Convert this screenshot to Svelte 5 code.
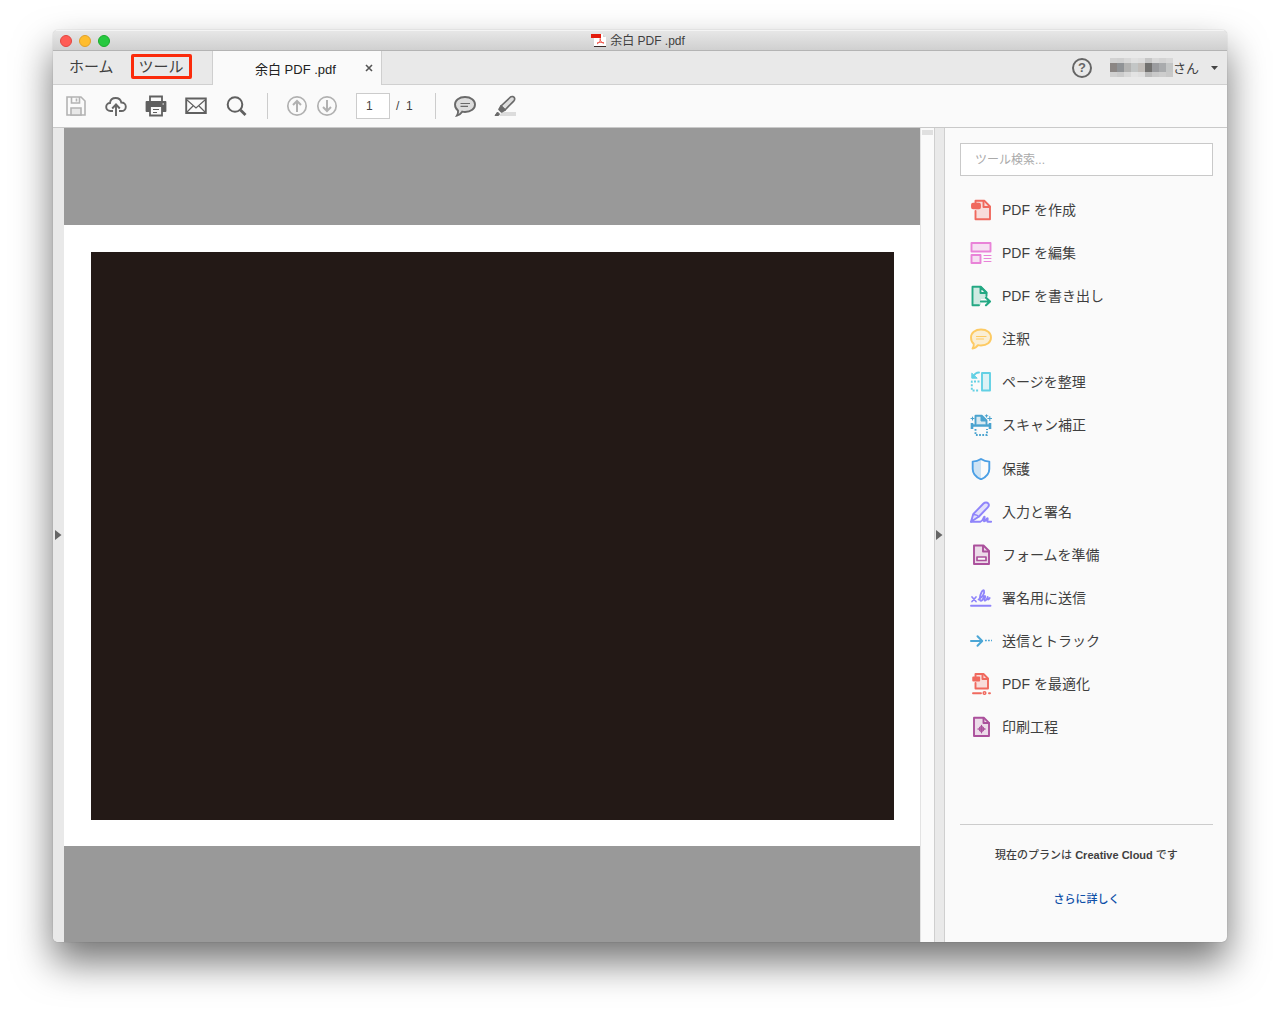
<script>
  const tools = [
    { icon: 'create', label: 'PDF を作成', color: '#f0695e' },
    { icon: 'edit', label: 'PDF を編集', color: '#e983d8' },
    { icon: 'export', label: 'PDF を書き出し', color: '#23a883' },
    { icon: 'comment', label: '注釈', color: '#fdca62' },
    { icon: 'organize', label: 'ページを整理', color: '#62d0e4' },
    { icon: 'scan', label: 'スキャン補正', color: '#4aa3cf' },
    { icon: 'protect', label: '保護', color: '#4b9fe5' },
    { icon: 'sign', label: '入力と署名', color: '#8f84fa' },
    { icon: 'form', label: 'フォームを準備', color: '#ab509c' },
    { icon: 'send-sign', label: '署名用に送信', color: '#8f84fa' },
    { icon: 'track', label: '送信とトラック', color: '#4ba6d6' },
    { icon: 'optimize', label: 'PDF を最適化', color: '#f0695e' },
    { icon: 'print', label: '印刷工程', color: '#ab509c' }
  ];

  const mosaic = [
    ['#d2d2d2', '#d0d0d0', '#d8d8d8', '#e0e0e0', '#dddddd', '#c6c6c6', '#d8d8d8', '#d3d3d3', '#d8d8d8'],
    ['#8b8684', '#909396', '#b3b3b2', '#c3c6c6', '#c1bdb9', '#72716f', '#9b9c9f', '#a9abad', '#c4c6c6'],
    ['#d0d0d0', '#cbcbcb', '#d8d8d8', '#e3e3e3', '#dfdfdf', '#bcbcbc', '#c9c9c9', '#cdcdcd', '#c8c8c8']
  ];
  const rowTop = [0, 5, 14];
  const rowHeight = [5, 9, 5];

  let page = $state('1');
  let query = $state('');
</script>

{#snippet toolIcon(name, color)}
  <svg class="tool-icon" viewBox="0 0 22 22" fill="none" stroke={color} stroke-width="1.9" stroke-linejoin="round" stroke-linecap="round" aria-hidden="true">
    {#if name === 'create'}
      <path d="M5.500 12V20h14.500V7.500L14.500 1.800H5.500V5z" fill={color} fill-opacity=".2" stroke="none" />
      <path d="M5.500 4V1.800h9L20 7.500V20.300H5.500V12" />
      <path d="M13.500 2v6H20" />
      <rect x="2" y="4.800" width="8" height="4.500" rx="1" fill={color} />
    {:else if name === 'edit'}
      <rect x="1.500" y="1" width="19" height="8.500" fill={color} fill-opacity=".22" />
      <rect x="1.500" y="13" width="9" height="8" fill={color} fill-opacity=".22" />
      <path d="M14 13.500h7M14 16.500h7M14 19.500h7" stroke-width="1" />
    {:else if name === 'export'}
      <path d="M3 2.500h7v5.500h6v6h-5v6H3z" fill={color} fill-opacity=".2" stroke="none" />
      <path d="M9 20.300H2.500V1.800h8.500l5.500 5.700V11" />
      <path d="M10.500 2v6h6z" />
      <path d="M11 16.500h8.500M16 12.800l4 3.700-4 3.700" stroke-width="2.200" />
    {:else if name === 'comment'}
      <path d="M11 1.500c6 0 10 3.300 10 8s-4 8-10 8c-1 0-2-.1-3-.4-1 1.700-3 3.200-5.500 3.400 1-1.300 1.500-3 1.200-4.700C1.900 14.300 1 12 1 9.500c0-4.700 4.200-8 10-8z" fill={color} fill-opacity=".25" />
      <path d="M6.500 8.500h9.500M6.500 11h7" stroke-width="1.200" />
    {:else if name === 'organize'}
      <rect x="12" y="2" width="8" height="17.500" fill={color} fill-opacity=".2" />
      <path d="M9.500 10.500H1.800V19.500H9.500" stroke-dasharray="2 1.500" stroke-linecap="butt" />
      <path d="M9 1.500C6.500 1.500 4.500 3 3.500 5.500" />
      <path d="M1.800 2.500v4.700h5z" fill={color} stroke-width="1" />
    {:else if name === 'scan'}
      <path d="M5.500 10V1.800h6.500l4.500 4.500V10" fill={color} fill-opacity=".2" />
      <path d="M11 2v5H16z" fill={color} stroke-width="1" />
      <path d="M2 9v6M20 9v6M2 11.500h18" stroke-width="2.600" stroke-linecap="butt" />
      <path d="M5.500 15v6h11.500v-6" stroke-dasharray="1.800 1.400" stroke-linecap="butt" />
      <path d="M2.500 3v3M1 4.500h3M16.500 .7v2.300M15.300 1.800h2.500M19.800 2.500v4M17.800 4.500h4" stroke-width="1.100" />
    {:else if name === 'protect'}
      <path d="M11 1c2.500 1.700 5 2.500 8.300 2.600V11c0 5-3.500 8.300-8.300 10.300C6.200 19.300 2.700 16 2.700 11V3.600C6 3.500 8.500 2.700 11 1z" />
      <path d="M11 2v18.500c-4.500-2-7.500-5-7.500-9.500V4.500C6.500 4.300 9 3.500 11 2z" fill={color} fill-opacity=".25" stroke="none" />
    {:else if name === 'sign'}
      <path d="M1 20.700l2.200-7.500L13.500 2.500c1.500-1.500 3.700-1.300 4.700-.2 1 1.300.8 2.800-.4 4L9 15.500z" fill={color} fill-opacity=".22" />
      <path d="M1 20.700h9.500c3-1 2.500-4.500 4-5 .8 1-1.500 4-.3 4.700 1.500.3 2-3.200 3.300-3.200.8.800-.7 2.900-.1 3.500h3.800" />
      <path d="M3.300 13.500c2.500 0 4.500.8 5.500 2.500" stroke-width="1.300" />
    {:else if name === 'form'}
      <path d="M4 1.500h9.500L19 7V20H4z" fill={color} fill-opacity=".18" />
      <path d="M13 2v5.500H19" />
      <path d="M7 13h9v3.500H7z" fill="#fafafa" stroke-width="1.700" />
    {:else if name === 'send-sign'}
      <path d="M1 18.700h19.500" />
      <path d="M2 10l4 4.500M6 10l-4 4.500" stroke-width="1.700" />
      <path d="M8.500 12.500C12 11 15 6 14 3.500c-1.200-1.500-4 3.500-4.200 7.700-.1 3.800 2.300 3.500 3.800-.7 1.200-2.500 2.300-1.500 1.300.5-1.100 2.500-.2 3.500 1.200 2 .9-1 1.500-2.500 1.700-3-.8 3 .4 3.500 1.900 1" stroke-width="1.800" />
    {:else if name === 'track'}
      <path d="M1 11h11M7.500 6.300l4.700 4.700-4.700 4.700" stroke-width="2" />
      <path d="M15 10.500h1.800M18 10.500h1.800M21 10.500h1" stroke-width="1.700" stroke-linecap="butt" />
    {:else if name === 'optimize'}
      <path d="M5.500 4V1h8l4.500 4.500V15.500H5.500V10" fill={color} fill-opacity=".2" />
      <path d="M12.500 1v5H18" />
      <rect x="3.200" y="4.500" width="6" height="3" fill={color} />
      <path d="M3 20.300h8M19 20.300h1" />
      <circle cx="14.500" cy="20" r="1.300" stroke-width="1.500" />
    {:else}
      <path d="M4 1.800h10l5 5v13.200H4z" fill={color} fill-opacity=".18" />
      <path d="M13.500 2v5H19" />
      <circle cx="11.500" cy="13" r="2.500" fill={color} fill-opacity=".7" stroke-width="1" />
      <path d="M11.500 9.300v7.500M7.800 13h7.500" stroke-width="1.200" />
    {/if}
  </svg>
{/snippet}

<div class="desktop">
  <div class="window">
    <header class="titlebar">
      <div class="lights">
        <button class="light red" aria-label="閉じる"></button>
        <button class="light yellow" aria-label="最小化"></button>
        <button class="light green" aria-label="拡大"></button>
      </div>
      <div class="title">
        <svg width="16" height="16" viewBox="0 0 16 16" aria-hidden="true">
          <path d="M3 1h9l3 3v10H3z" fill="#fff" />
          <path d="M12 1v3h3z" fill="#d5d5d5" />
          <path d="M0 1h10v4H0z" fill="#e31b0c" />
          <path d="M3 13h12v1H3z" fill="#3a2a28" />
          <path d="M9 5c1 2 0 4-3 6M9 6c0 2 2 4 4 4M6 10c2-1 4-1 7 0" fill="none" stroke="#f0554b" />
        </svg>
        <span>余白 PDF .pdf</span>
      </div>
    </header>

    <nav class="tabs">
      <div class="sections">
        <button class="section">ホーム</button>
        <button class="section marked">ツール</button>
      </div>
      <div class="doc-tab">
        <span class="doc-name">余白 PDF .pdf</span>
        <button class="close" aria-label="タブを閉じる">
          <svg width="8" height="8" viewBox="0 0 8 8"><path d="M1 1l6 6M7 1L1 7" stroke="#555" stroke-width="1.600" /></svg>
        </button>
      </div>
      <div class="account">
        <button class="help" aria-label="ヘルプ">?</button>
        <button class="user">
          <svg width="63" height="19" viewBox="0 0 63 19" shape-rendering="crispEdges" aria-hidden="true">
            {#each mosaic as row, r}
              {#each row as fill, c}
                <rect x={c * 7} y={rowTop[r]} width="7" height={rowHeight[r]} {fill} />
              {/each}
            {/each}
          </svg>
          <span>さん</span>
          <svg class="caret" width="7" height="4" viewBox="0 0 7 4" aria-hidden="true"><path d="M0 0h7L3.500 4z" fill="#444" /></svg>
        </button>
      </div>
    </nav>

    <div class="toolbar">
      <div class="files">
        <button class="tool" aria-label="保存">
          <svg viewBox="0 0 22 22" fill="none" stroke="#b3b3b3" stroke-width="1.600">
            <path d="M2 2h14l4 4v14H2z" /><path d="M6.500 2v6h8V2" /><path d="M11.500 3.500v3" />
            <path d="M6 20v-7h10v7z" fill="#e8e8e8" />
          </svg>
        </button>
        <button class="tool" aria-label="アップロード">
          <svg viewBox="0 0 22 22" fill="none" stroke="#666" stroke-width="1.900">
            <path d="M8 16H5.500C3 16 1.200 14.300 1.200 12S3 8 5 8c.3-3 2.500-5 5.700-5 3 0 5 1.700 5.600 4.500 2.600 0 4.500 1.800 4.500 4.200S19 16 16.500 16H14" />
            <path d="M11 21V10M7.200 13.500L11 9.500l3.800 4" />
          </svg>
        </button>
        <button class="tool" aria-label="印刷">
          <svg viewBox="0 0 22 22" fill="none" stroke="#606060" stroke-width="1.800">
            <path d="M5 6V1.500h12V6" />
            <path d="M1.500 7h19v9h-19z" fill="#606060" stroke-linejoin="round" />
            <path d="M5 11h12v9.500H5z" fill="#fafafa" />
            <path d="M8 14.500h6M8 17.500h4" stroke-width="1.200" /><path d="M17.500 9h1.500" stroke="#fafafa" stroke-width="1.200" />
          </svg>
        </button>
        <button class="tool" aria-label="メール">
          <svg viewBox="0 0 22 22" fill="none" stroke="#606060">
            <path d="M1.200 3.500h19.600v14.500H1.200z" stroke-width="1.900" />
            <path d="M2 5l9 8 9-8M2 17l6.500-6.500M20 17l-6.500-6.500" stroke-width="1.200" />
          </svg>
        </button>
        <button class="tool" aria-label="検索">
          <svg viewBox="0 0 22 22" fill="none" stroke="#606060">
            <circle cx="10" cy="9.500" r="7.300" stroke-width="2" /><path d="M15.500 15l5 5" stroke-width="2.800" />
          </svg>
        </button>
      </div>
      <div class="pager">
        <button class="tool" aria-label="前のページ">
          <svg viewBox="0 0 22 22" fill="none" stroke="#b1b1b1" stroke-width="1.700">
            <circle cx="11" cy="11" r="9.200" /><path d="M11 17V6M7 10l4-4 4 4" stroke-width="2" />
          </svg>
        </button>
        <button class="tool" aria-label="次のページ">
          <svg viewBox="0 0 22 22" fill="none" stroke="#b1b1b1" stroke-width="1.700">
            <circle cx="11" cy="11" r="9.200" /><path d="M11 5v11M7 12l4 4 4-4" stroke-width="2" />
          </svg>
        </button>
        <input class="page-no" type="text" bind:value={page} aria-label="ページ番号" />
        <span class="page-total">/&nbsp; 1</span>
      </div>
      <div class="markup">
        <button class="tool" aria-label="コメント">
          <svg viewBox="0 0 22 22" fill="none" stroke="#6a6a6a" stroke-width="1.900">
            <path d="M11 2c6 0 10 3.200 10 7.500S17 17 11 17c-1 0-2-.1-2.800-.3C7 18.500 5.500 20 3 20.500c1-1.500 1.300-3 1-5C2 14 1 12 1 9.500 1 5.200 5 2 11 2z" fill="#ddd" />
            <path d="M6.500 8.500h9.500M6.500 11.300h7.500" stroke-width="1.200" />
          </svg>
        </button>
        <button class="tool" aria-label="ハイライト">
          <svg viewBox="0 0 22 22" fill="none" stroke="#6a6a6a" stroke-width="1.700" stroke-linejoin="round">
            <path d="M8 17h14v4H5z" fill="#dcdcdc" stroke="none" />
            <path d="M7 11l9.500-9c1.500-1 3.500-.3 4 1 .3 1 .1 2-.6 2.800L11 15z" fill="#ddd" />
            <path d="M7 11l4 4-3.500 2-2.500-2.500z" fill="#6a6a6a" /><path d="M3.500 17l2 2-1 1.500H1z" fill="#6a6a6a" stroke-width="1" />
          </svg>
        </button>
      </div>
    </div>

    <main class="body">
      <button class="strip left" aria-label="ナビゲーションを開く">
        <svg width="7" height="10" viewBox="0 0 7 10"><path d="M0 0v10l6.500-5z" fill="#666" /></svg>
      </button>
      <section class="canvas">
        <div class="sheet"><div class="artwork"></div></div>
      </section>
      <div class="scroll"><div class="thumb"></div></div>
      <button class="strip right" aria-label="ツールパネルを閉じる">
        <svg width="7" height="10" viewBox="0 0 7 10"><path d="M0 0v10l6.500-5z" fill="#666" /></svg>
      </button>
      <aside class="panel">
        <input class="search" type="text" placeholder="ツール検索..." aria-label="ツール検索" bind:value={query} />
        <ul class="tool-list">
          {#each tools as tool}
            <li>
              <button class="tool-row">
                {@render toolIcon(tool.icon, tool.color)}
                <span>{tool.label}</span>
              </button>
            </li>
          {/each}
        </ul>
        <footer class="plan">
          <p>現在のプランは <strong>Creative Cloud</strong> です</p>
          <a href="#more">さらに詳しく</a>
        </footer>
      </aside>
    </main>
  </div>
</div>

<style>
  :global(body) {
    background: #fff;
  }

  .desktop,
  .desktop * {
    box-sizing: border-box;
  }

  .desktop {
    display: flex;
    min-height: 100vh;
    padding: 30px 53px 75px;
    font-family: "Liberation Sans", "Noto Sans CJK JP", sans-serif;
    color: #3f3f3f;
  }

  button {
    display: flex;
    align-items: center;
    justify-content: center;
    padding: 0;
    border: 0;
    background: none;
    color: inherit;
    font: inherit;
  }

  svg {
    display: block;
    flex: none;
  }

  .window {
    display: flex;
    flex: 1;
    flex-direction: column;
    min-width: 0;
    overflow: hidden;
    border-radius: 5px;
    background: #fafafa;
    box-shadow: 0 0 1px rgba(0, 0, 0, 0.4), 0 20px 38px rgba(0, 0, 0, 0.55);
  }

  .titlebar {
    display: grid;
    grid-template-columns: 1fr auto 1fr;
    align-items: center;
    height: 21px;
    padding: 1px 7px 0;
    border-bottom: 1px solid #b4b4b4;
    background: linear-gradient(#e8e8e8, #d0d0d0);
    box-shadow: inset 0 1px #f4f4f4;
  }

  .lights {
    display: flex;
    gap: 7px;
  }

  .light {
    width: 12px;
    height: 12px;
    border: 1px solid;
    border-radius: 50%;
  }

  .red {
    border-color: #e2463f;
    background: #ff5c55;
  }

  .yellow {
    border-color: #e0a02a;
    background: #ffbd2e;
  }

  .green {
    border-color: #1aab2c;
    background: #27c940;
  }

  .title {
    display: flex;
    align-items: center;
    gap: 3px;
    padding-right: 4px;
    font-size: 12px;
    line-height: 18px;
  }

  .tabs {
    display: flex;
    height: 34px;
    background: #e9e9e9;
  }

  .sections {
    display: flex;
    align-items: center;
    gap: 9px;
    width: 159px;
    padding: 0 5px 2px 8px;
    border-bottom: 1px solid #d0d0d0;
  }

  .section {
    height: 25px;
    padding: 0 5px;
    border: 3px solid transparent;
    border-radius: 2px;
    font-size: 15px;
    line-height: 19px;
  }

  .marked {
    border-color: #fb2b0b;
  }

  .doc-tab {
    display: flex;
    align-items: center;
    justify-content: space-between;
    width: 170px;
    padding: 0 8px 0 42px;
    border: solid #cfcfcf;
    border-width: 0 1px;
    background: #fafafa;
    color: #222;
    font-size: 13px;
  }

  .account {
    display: flex;
    flex: 1;
    align-items: center;
    justify-content: flex-end;
    gap: 18px;
    padding-right: 9px;
    border-bottom: 1px solid #d0d0d0;
  }

  .help {
    width: 20px;
    height: 20px;
    border: 2px solid #666;
    border-radius: 50%;
    color: #666;
    font-size: 13px;
    font-weight: bold;
    line-height: 16px;
  }

  .user {
    font-size: 13px;
  }

  .caret {
    margin-left: 12px;
  }

  .toolbar {
    display: flex;
    align-items: center;
    height: 43px;
    padding: 0 12px;
    border-bottom: 1px solid #c9c9c9;
  }

  .files,
  .pager,
  .markup {
    display: flex;
    align-items: center;
    height: 26px;
  }

  .files {
    gap: 18px;
    padding-right: 20px;
    border-right: 1px solid #ccc;
  }

  .pager {
    gap: 8px;
    padding: 0 22px 0 18px;
    border-right: 1px solid #ccc;
  }

  .markup {
    gap: 18px;
    padding-left: 18px;
  }

  .tool svg {
    width: 22px;
    height: 22px;
  }

  .page-no {
    width: 34px;
    height: 26px;
    margin: 0 -2px 0 10px;
    padding: 0 9px;
    border: 1px solid #ccc;
    background: #fff;
    color: #444;
    font: 12px "Liberation Sans", sans-serif;
  }

  .page-total {
    font-size: 12px;
  }

  .body {
    display: flex;
    flex: 1;
  }

  .strip {
    width: 11px;
    background: #e9e9e9;
  }

  .right {
    border: solid #cfcfcf;
    border-width: 0 1px;
  }

  .canvas {
    display: flex;
    flex: 1;
    padding: 97px 0 96px;
    background: #999;
  }

  .sheet {
    display: flex;
    flex: 1;
    padding: 27px 26px 26px 27px;
    background: #fff;
  }

  .artwork {
    flex: 1;
    background: #231916;
  }

  .scroll {
    width: 14px;
    padding: 2px 1px;
    border-left: 1px solid #e3e3e3;
  }

  .thumb {
    height: 5px;
    background: #e0e0e0;
  }

  .panel {
    display: flex;
    flex-direction: column;
    width: 282px;
    padding: 15px 14px 0 15px;
  }

  .search {
    height: 33px;
    padding: 0 14px;
    border: 1px solid #c9c9c9;
    background: #fff;
    font: 12px "Liberation Sans", "Noto Sans CJK JP", sans-serif;
  }

  .search::placeholder {
    color: #aaa;
  }

  .tool-list {
    display: flex;
    flex-direction: column;
    height: 561px;
    margin: 12px 0 0;
    padding: 0;
    list-style: none;
  }

  .tool-list li {
    display: flex;
    flex: 1;
  }

  .tool-row {
    flex: 1;
    justify-content: flex-start;
    gap: 10px;
    padding-left: 10px;
    font-size: 14px;
    line-height: 20px;
  }

  .tool-icon {
    width: 22px;
    height: 22px;
  }

  .plan {
    display: flex;
    flex-direction: column;
    align-items: center;
    gap: 26px;
    height: 118px;
    margin-top: auto;
    padding-top: 21px;
    border-top: 1px solid #ccc;
    font-size: 11px;
    font-weight: 500;
    line-height: 18px;
  }

  .plan p {
    margin: 0;
  }

  .plan a {
    color: #0d4fa8;
    text-decoration: none;
  }
</style>
